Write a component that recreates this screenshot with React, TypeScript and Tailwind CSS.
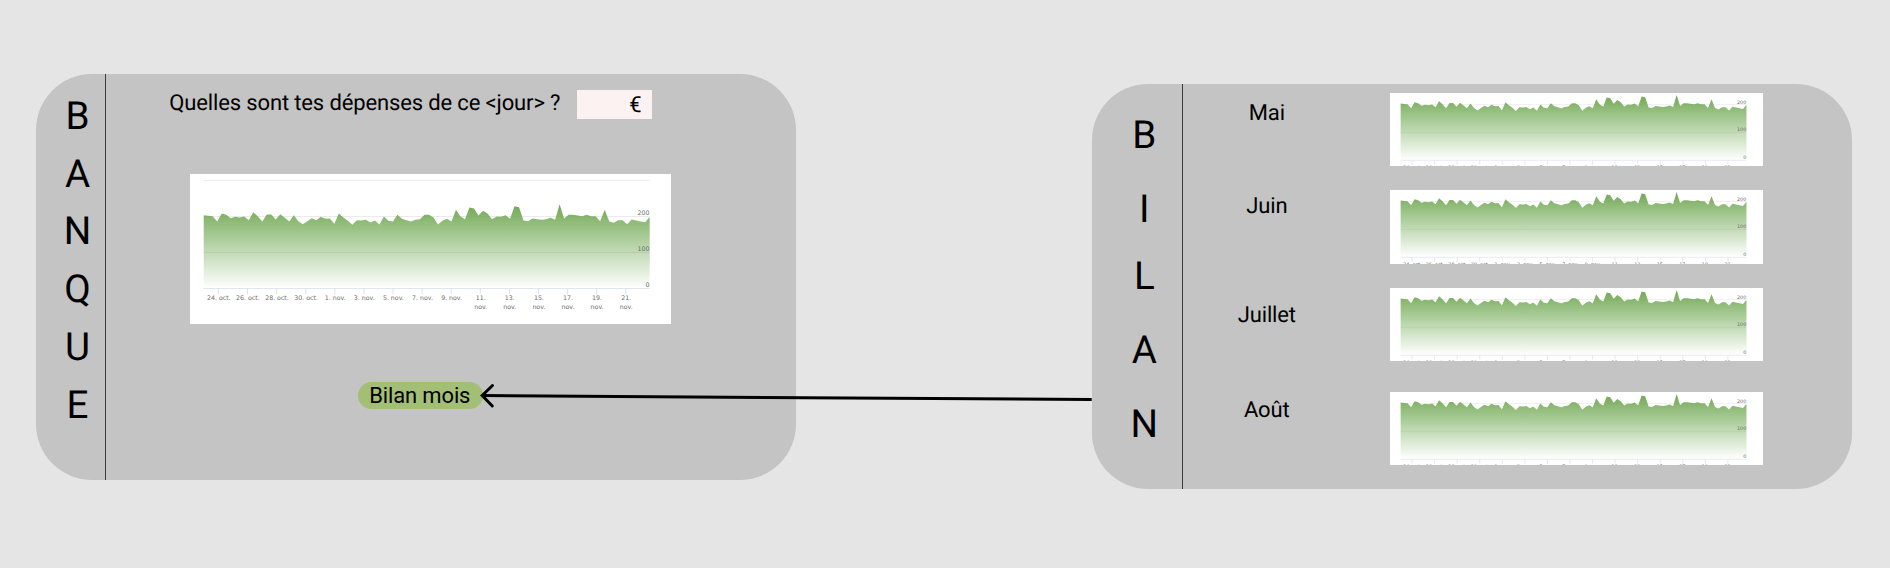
import React from "react";

const HEIGHTS = [
  150, 152, 153, 169, 145, 149, 159, 155, 157, 154, 165, 141, 153, 169, 148, 148, 163, 147, 158, 169,
  150, 168, 177, 168, 159, 165, 155, 161, 160, 176, 145, 157, 167, 179, 165, 166, 164, 172, 166, 178,
  154, 167, 169, 149, 161, 165, 169, 164, 162, 149, 149, 157, 178, 167, 161, 169, 134, 154, 162, 127,
  130, 151, 137, 145, 162, 154, 155, 150, 161, 123, 126, 166, 168, 160, 162, 164, 162, 158, 164, 117,
  160, 149, 149, 151, 153, 149, 153, 153, 168, 134, 168, 173, 165, 165, 177, 163, 166, 169, 171, 155,
];

const LEFT = 13.7;
const RIGHT = 459.7;
const BASE = 114.5;

const points = HEIGHTS.map(
  (h, i) => `${(LEFT + (i * (RIGHT - LEFT)) / 99).toFixed(2)},${(h / 3 - 8.8).toFixed(2)}`
).join(" ");

const DATES = [
  ["24. oct."], ["26. oct."], ["28. oct."], ["30. oct."], ["1. nov."], ["3. nov."], ["5. nov."], ["7. nov."], ["9. nov."],
  ["11.", "nov."], ["13.", "nov."], ["15.", "nov."], ["17.", "nov."], ["19.", "nov."], ["21.", "nov."],
];

const SCALE = [
  { label: "200", line: 42.5 },
  { label: "100", line: 78.5 },
  { label: "0", line: 114.5 },
];

function ExpenseChart({ id, viewBox, className }: { id: string; viewBox: string; className: string }) {
  return (
    <svg viewBox={viewBox} preserveAspectRatio="none" className={className}>
      <defs>
        <linearGradient id={id} x1="0" y1="0" x2="0" y2="1">
          <stop offset="0" stopColor="#6aa34a" stopOpacity="0.95" />
          <stop offset="1" stopColor="#6aa84f" stopOpacity="0" />
        </linearGradient>
      </defs>
      <g stroke="#e6e6e6" strokeWidth="0.8">
        <line x1={LEFT} x2={RIGHT} y1="6.4" y2="6.4" />
        <line x1={LEFT} x2={RIGHT} y1="42.5" y2="42.5" />
        <line x1={LEFT} x2={RIGHT} y1="78.5" y2="78.5" />
      </g>
      <polygon points={`${LEFT},${BASE} ${points} ${RIGHT},${BASE}`} fill={`url(#${id})`} />
      <line x1={LEFT} x2={RIGHT} y1={BASE} y2={BASE} stroke="#dde2f0" strokeWidth="0.9" />
      <g fill="#6c6c6c" fontSize="6.25" fontFamily="'DejaVu Sans', sans-serif" textRendering="geometricPrecision">
        {DATES.map((lines, i) => {
          const x = 28.4 + i * 29.1;
          return (
            <g key={i}>
              <line x1={x} x2={x} y1={BASE} y2="120.3" stroke="#ccd6eb" strokeWidth="0.7" />
              {lines.map((text, row) => (
                <text key={row} x={x + 0.4} y={125.8 + row * 8.7} textAnchor="middle">
                  {text}
                </text>
              ))}
            </g>
          );
        })}
        {SCALE.map(({ label, line }) => (
          <text key={label} x={RIGHT - 0.3} y={line - 1.2} textAnchor="end">
            {label}
          </text>
        ))}
      </g>
    </svg>
  );
}

const MONTHS = [
  { name: "Mai", label: "pt-[7.5px]", row: "h-[97.7px]" },
  { name: "Juin", label: "pt-[2.5px]", row: "h-[97.6px]" },
  { name: "Juillet", label: "pt-[13.8px]", row: "h-[104px]" },
  { name: "Août", label: "pt-[5px]", row: "h-[74px]" },
];

export default function App() {
  return (
    <main className="relative flex h-[568px] w-[1890px] items-start overflow-hidden bg-[#e5e5e5] font-['Roboto',sans-serif] text-[22px] leading-7 text-black [text-rendering:geometricPrecision]">
      <section className="mt-[74px] ml-9 flex h-[405.5px] w-[760px] rounded-[56px] bg-[#c4c4c4]">
        <h1 className="flex w-[70px] shrink-0 flex-col items-center border-r border-[#3c3c3c] pt-[14px] pl-[14px] text-[38.6px] leading-[57.7px] font-normal">
          {"BANQUE".split("").map((letter, i) => (
            <span key={i}>{letter}</span>
          ))}
        </h1>
        <div className="flex flex-1 flex-col">
          <div className="flex items-start pt-[14.5px] pl-[63.3px]">
            <p className="mt-px w-[407.7px] tracking-[-0.14px] whitespace-nowrap">
              Quelles sont tes dépenses de ce &lt;jour&gt; ?
            </p>
            <div className="mt-[1.5px] h-[29px] w-[74.6px] bg-[#fcf2f2] pr-2.5 text-right leading-[31px]">€</div>
          </div>
          <div className="mt-[54.5px] ml-[84px] h-[150.5px] w-[481px] bg-white">
            <ExpenseChart id="daily" viewBox="0 0 481 150.5" className="block h-full w-full" />
          </div>
          <button className="mt-[58px] ml-[251.5px] h-[27px] w-[125.5px] rounded-full bg-[#a3bf76] pr-px text-center leading-[26px] tracking-[-0.14px]">
            Bilan mois
          </button>
        </div>
      </section>

      <section className="mt-[83.5px] ml-[295.5px] flex h-[405.8px] w-[760px] rounded-[56px] bg-[#c4c4c4]">
        <h1 className="flex w-[91.3px] shrink-0 flex-col items-center border-r border-[#3c3c3c] pt-[18.6px] pl-[15.3px] text-[38.6px] leading-[67px] font-normal">
          <span>B</span>
          <span className="mt-[7px]">I</span>
          <span>L</span>
          <span className="mt-[7px]">A</span>
          <span className="mt-[7px]">N</span>
        </h1>
        <div className="flex-1 pt-[9.2px]">
          {MONTHS.map(({ name, label, row }) => (
            <div key={name} className={`flex ${row}`}>
              <div className={`w-[168px] text-center tracking-[-0.14px] ${label}`}>{name}</div>
              <div className="ml-[39px] h-[73.5px] w-[373px] bg-white">
                <ExpenseChart id={`month-${name}`} viewBox="0 27.7 481 94.8" className="block h-full w-full" />
              </div>
            </div>
          ))}
        </div>
      </section>

      <svg
        className="absolute top-[380px] left-[478px] h-8 w-[614px]"
        viewBox="0 0 614 32"
        fill="none"
        stroke="#000"
        strokeWidth="3"
      >
        <path d="M4 15.5 L613.7 19.6" />
        <path d="M14.5 5.5 L4.2 15.5 L14.3 26" strokeLinecap="round" />
      </svg>
    </main>
  );
}
